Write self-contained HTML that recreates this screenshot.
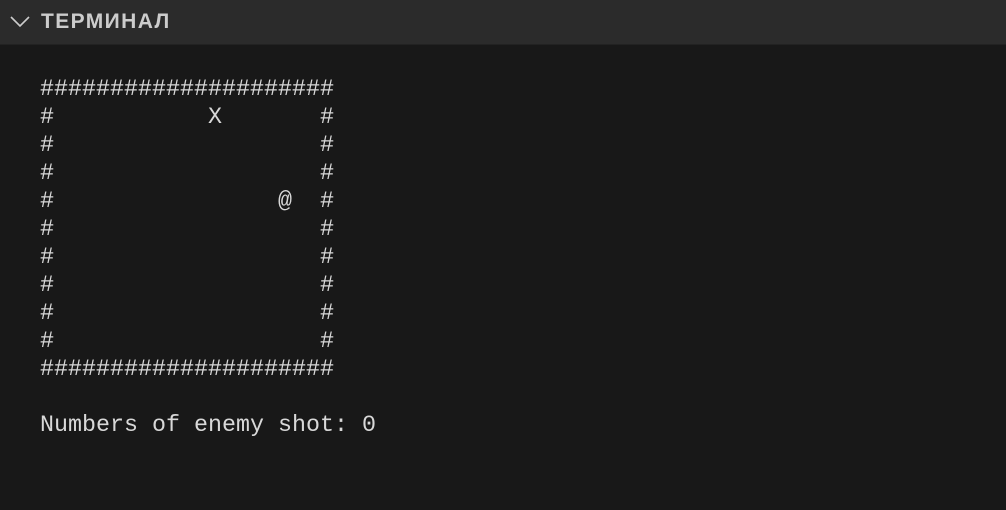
<!DOCTYPE html>
<html><head><meta charset="utf-8"><style>
html,body{margin:0;padding:0;width:1006px;height:510px;overflow:hidden;background:#181818;}
.hdr{position:absolute;left:0;top:0;width:1006px;height:44px;background:#2b2b2b;border-bottom:1px solid #222;}
.hdr svg{position:absolute;left:9px;top:14px;}
.hdr .t{position:absolute;left:41px;top:8px;font:bold 21px "Liberation Sans","DejaVu Sans",sans-serif;color:#cccccc;letter-spacing:1.4px;line-height:28px;}
pre{position:absolute;left:40px;top:76px;margin:0;font-family:"Liberation Mono","DejaVu Sans Mono",monospace;font-size:23.33px;line-height:28px;color:#d8d8d8;}
</style></head><body>
<div class="hdr"><svg width="22" height="14" viewBox="0 0 22 14"><path d="M2 3 L11 12 L20 3" fill="none" stroke="#cccccc" stroke-width="1.6"/></svg><div class="t">ТЕРМИНАЛ</div></div>
<pre>#####################
#           X       #
#                   #
#                   #
#                @  #
#                   #
#                   #
#                   #
#                   #
#                   #
#####################

Numbers of enemy shot: 0</pre>
</body></html>
